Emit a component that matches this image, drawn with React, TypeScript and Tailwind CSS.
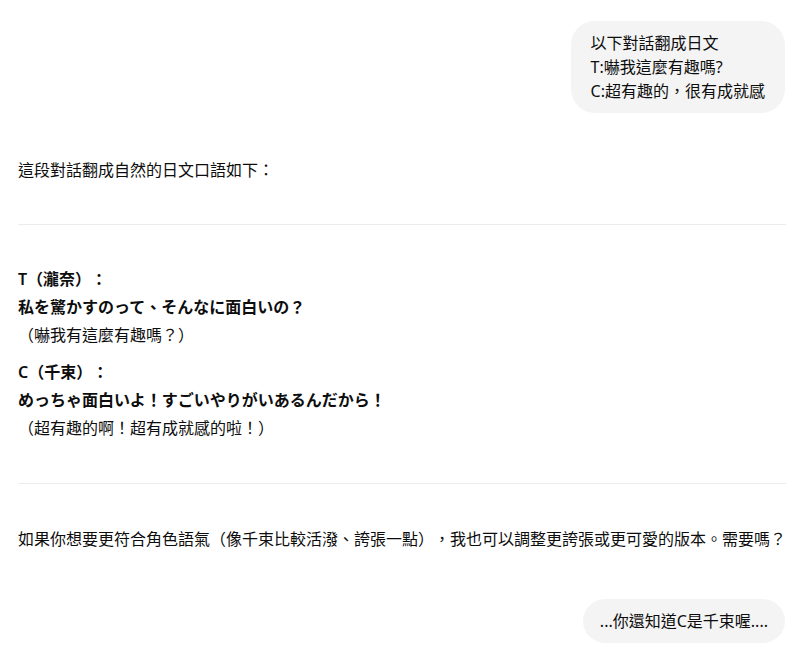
export default function App() {
  return (
    <div className="min-h-screen bg-white text-[#0d0d0d] text-[16px] [text-spacing-trim:space-all] font-['Noto_Sans','Noto_Sans_CJK_TC',sans-serif]">
      <div className="flex flex-col px-[18px] pt-[21px] pb-[8px]">
        {/* user message */}
        <div className="flex justify-end pr-px">
          <div className="rounded-[24px] bg-[#f4f4f4] px-5 py-[10px] leading-6">
            <p>以下對話翻成日文</p>
            <p>T:嚇我這麼有趣嗎?</p>
            <p>C:超有趣的，很有成就感</p>
          </div>
        </div>

        {/* assistant reply */}
        <div className="mt-[43px] leading-7">
          <p>這段對話翻成自然的日文口語如下：</p>

          <hr className="my-[40px] border-t border-[#ececec]" />

          <div className="flex flex-col gap-[9px]">
            <div>
              <p className="font-semibold">T（瀧奈）：</p>
              <p className="font-semibold">私を驚かすのって、そんなに面白いの？</p>
              <p>（嚇我有這麼有趣嗎？）</p>
            </div>
            <div>
              <p className="font-semibold">C（千束）：</p>
              <p className="font-semibold">めっちゃ面白いよ！すごいやりがいあるんだから！</p>
              <p>（超有趣的啊！超有成就感的啦！）</p>
            </div>
          </div>

          <hr className="my-[41px] border-t border-[#ececec]" />

          <p>如果你想要更符合角色語氣（像千束比較活潑、誇張一點），我也可以調整更誇張或更可愛的版本。需要嗎？</p>
        </div>

        {/* user message */}
        <div className="mt-[46px] flex justify-end pr-px">
          <div className="rounded-[24px] bg-[#f4f4f4] px-[17px] py-[10px] leading-6">
            <p>...你還知道C是千束喔....</p>
          </div>
        </div>
      </div>
    </div>
  );
}
